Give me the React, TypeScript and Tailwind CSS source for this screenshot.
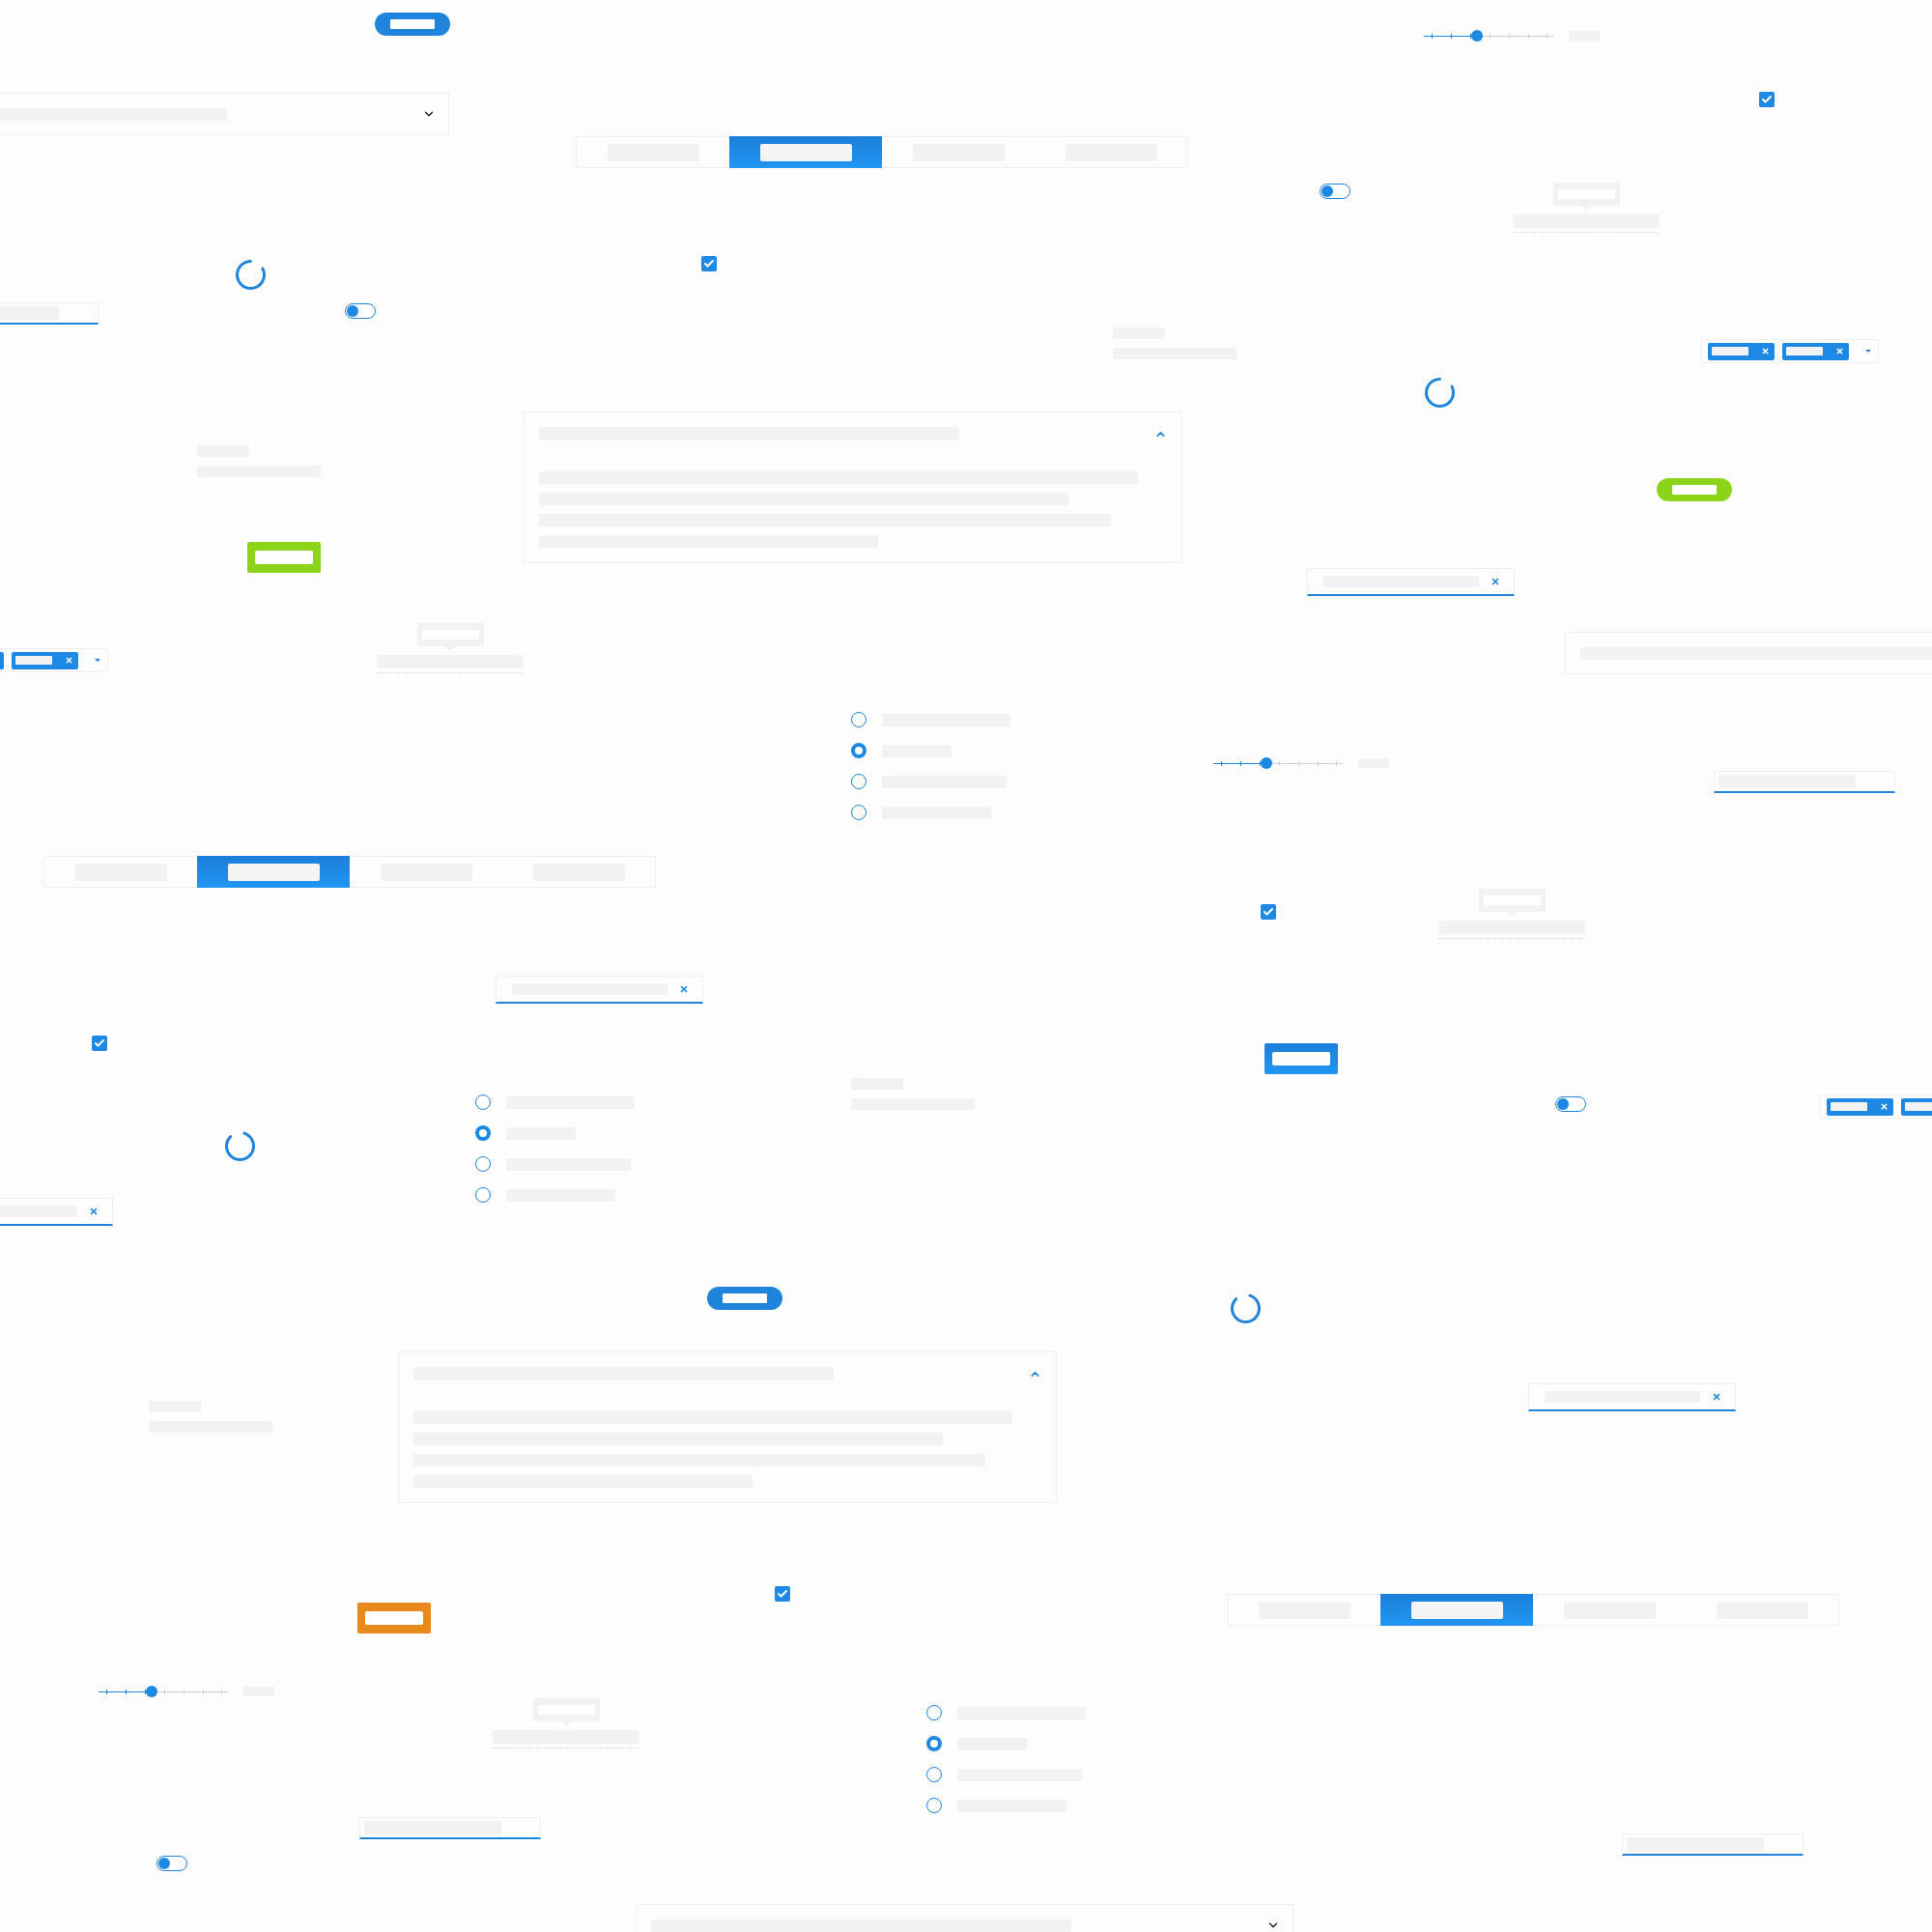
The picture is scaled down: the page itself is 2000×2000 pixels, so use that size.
import { ChevronDown, ChevronUp, Check, X } from 'lucide-react';

type Pos = { x: number; y: number };

// Widgets are scattered on a free canvas: their place is the content
function At({ x, y, children }: Pos & { children: React.ReactNode }) {
  return (
    <div className="absolute" style={{ left: x, top: y }}>
      {children}
    </div>
  );
}

function Pill({ color }: { color: 'blue' | 'green' }) {
  return (
    <div
      className={
        'w-[78px] h-[24px] rounded-full flex items-center justify-center ' +
        (color === 'blue' ? 'bg-[#1e84dc]' : 'bg-[#8bd41a]')
      }
    >
      <div className="w-[46px] h-[10px] bg-white rounded-[1px]" />
    </div>
  );
}

function RectButton({ color }: { color: 'blue' | 'green' | 'orange' }) {
  const bg =
    color === 'blue'
      ? 'bg-gradient-to-b from-[#1c7fd9] to-[#2196f3]'
      : color === 'green'
        ? 'bg-[#8bd41a]'
        : 'bg-[#e8891c]';
  return (
    <div className={'w-[76px] h-[32px] rounded-[2px] flex items-center justify-center ' + bg}>
      <div className="w-[60px] h-[14px] bg-white rounded-[2px]" />
    </div>
  );
}

function Select() {
  return (
    <div className="w-[681px] h-[44px] border border-[#efefef] bg-[#fdfdfd] flex items-center justify-between pl-[15px] pr-[13px]">
      <div className="w-[435px] h-[13px] bg-[#f2f2f2]" />
      <ChevronDown size={14} strokeWidth={2.5} className="text-[#222]" />
    </div>
  );
}

function Tabs() {
  return (
    <div className="w-[634px] h-[33px] border border-[#efefef] bg-[#fdfdfd] flex">
      {[0, 1, 2, 3].map((i) => (
        <div
          key={i}
          className={
            'flex-1 flex items-center justify-center ' +
            (i === 1 ? 'bg-gradient-to-b from-[#1c7fd9] to-[#2196f3] -my-px' : '')
          }
        >
          <div className={'w-[95px] h-[18px] ' + (i === 1 ? 'bg-[#f4f4f4] rounded-[2px]' : 'bg-[#f2f2f2]')} />
        </div>
      ))}
    </div>
  );
}

function Slider() {
  const ticks = [8, 28, 48, 68, 88, 108, 127];
  return (
    <div className="flex items-center gap-[16px]">
      <div className="relative w-[134px] h-[12px]">
        <div className="absolute left-0 top-[6px] w-[55px] h-px bg-[#1e84dc]" />
        <div className="absolute left-[55px] top-[6px] w-[79px] h-px bg-[#cfcfcf]" />
        {ticks.map((t) => (
          <div
            key={t}
            className={'absolute top-[4px] w-px h-[5px] ' + (t < 55 ? 'bg-[#1e84dc]' : 'bg-[#cfcfcf]')}
            style={{ left: t }}
          />
        ))}
        <div className="absolute left-[49px] top-0 w-[12px] h-[12px] rounded-full bg-[#1e88e5]" />
      </div>
      <div className="w-[32px] h-[10px] bg-[#f2f2f2]" />
    </div>
  );
}

function Checkbox() {
  return (
    <div className="w-[16px] h-[16px] rounded-[2px] bg-[#1e88e5] flex items-center justify-center">
      <Check size={12} strokeWidth={4} className="text-white" />
    </div>
  );
}

function Toggle() {
  return (
    <div className="w-[32px] h-[16px] rounded-full border border-[#1e84dc] bg-white flex items-center pl-px">
      <div className="w-[12px] h-[12px] rounded-full bg-[#1e88e5]" />
    </div>
  );
}

function Tooltip() {
  return (
    <div className="w-[152px] flex flex-col items-center">
      <div className="w-[69px] h-[24px] bg-[#f2f2f2] flex items-center justify-center">
        <div className="w-[59px] h-[10px] bg-white" />
      </div>
      <div className="w-0 h-0 border-l-[5px] border-r-[5px] border-t-[5px] border-l-transparent border-r-transparent border-t-[#f2f2f2]" />
      <div className="mt-[4px] w-[152px] h-[14px] bg-[#f2f2f2]" />
      <div className="mt-[4px] w-[152px] border-t border-dotted border-[#dcdcdc]" />
    </div>
  );
}

function Spinner({ rotate }: { rotate: number }) {
  return (
    <svg width="33" height="33" viewBox="0 0 33 33" style={{ transform: `rotate(${rotate}deg)` }}>
      <circle
        cx="16.5"
        cy="16.5"
        r="14"
        fill="none"
        stroke="#1e84dc"
        strokeWidth="3"
        strokeLinecap="round"
        strokeDasharray="72 16"
      />
    </svg>
  );
}

function UnderlineInput() {
  return (
    <div className="w-[188px] h-[23px] border border-[#efefef] border-b-2 border-b-[#1e84dc] bg-[#fdfdfd] pl-[4px] pt-[3px]">
      <div className="w-[142px] h-[14px] bg-[#f2f2f2]" />
    </div>
  );
}

function ClearInput() {
  return (
    <div className="w-[215px] h-[29px] border border-[#efefef] border-b-2 border-b-[#1e84dc] bg-[#fdfdfd] flex items-center pl-[16px] pr-[14px] justify-between">
      <div className="w-[161px] h-[12px] bg-[#f2f2f2]" />
      <X size={10} strokeWidth={4} className="text-[#1e84dc]" />
    </div>
  );
}

function LabelValue() {
  return (
    <div className="flex flex-col gap-[9px]">
      <div className="w-[54px] h-[12px] bg-[#f2f2f2]" />
      <div className="w-[128px] h-[12px] bg-[#f2f2f2]" />
    </div>
  );
}

function MultiSelect() {
  return (
    <div className="w-[184px] h-[25px] border border-[#efefef] bg-[#fdfdfd] flex items-center pl-[6px] gap-[8px]">
      {[0, 1].map((i) => (
        <div key={i} className="w-[69px] h-[18px] rounded-[2px] bg-[#1e88e5] flex items-center justify-between pl-[4px] pr-[5px]">
          <div className="w-[38px] h-[9px] bg-[#f2f2f2] rounded-[1px]" />
          <X size={9} strokeWidth={4} className="text-white" />
        </div>
      ))}
      <div className="ml-[9px] w-0 h-0 border-l-[3px] border-r-[3px] border-t-[3px] border-l-transparent border-r-transparent border-t-[#1e84dc]" />
    </div>
  );
}

function Accordion() {
  const lines = [620, 548, 592, 351];
  return (
    <div className="w-[682px] h-[157px] border border-[#efefef] bg-[#fdfdfd] px-[15px] pt-[15px]">
      <div className="flex items-center justify-between">
        <div className="w-[435px] h-[14px] bg-[#f2f2f2]" />
        <ChevronUp size={13} strokeWidth={3} className="text-[#1e84dc]" />
      </div>
      <div className="mt-[32px] flex flex-col gap-[9px]">
        {lines.map((w) => (
          <div key={w} className="h-[13px] bg-[#f2f2f2]" style={{ width: w }} />
        ))}
      </div>
    </div>
  );
}

function RadioGroup() {
  const labels = [133, 72, 129, 113];
  return (
    <div className="flex flex-col gap-[16px]">
      {labels.map((w, i) => (
        <div key={i} className="flex items-center gap-[16px] h-[16px]">
          <div
            className={
              'w-[16px] h-[16px] rounded-full bg-white ' +
              (i === 1 ? 'border-[4px] border-[#1e88e5]' : 'border border-[#1e84dc]')
            }
          />
          <div className="h-[13px] bg-[#f2f2f2]" style={{ width: w }} />
        </div>
      ))}
    </div>
  );
}

export default function App() {
  return (
    <div className="relative w-[2000px] h-[2000px] overflow-hidden bg-[#fdfdfd] font-['Liberation_Sans',sans-serif]">
      <At x={388} y={13}><Pill color="blue" /></At>
      <At x={732} y={1332}><Pill color="blue" /></At>
      <At x={1715} y={495}><Pill color="green" /></At>

      <At x={256} y={561}><RectButton color="green" /></At>
      <At x={1309} y={1080}><RectButton color="blue" /></At>
      <At x={370} y={1659}><RectButton color="orange" /></At>

      <At x={-216} y={96}><Select /></At>
      <At x={1620} y={654}><Select /></At>
      <At x={658} y={1971}><Select /></At>

      <At x={596} y={141}><Tabs /></At>
      <At x={45} y={886}><Tabs /></At>
      <At x={1270} y={1650}><Tabs /></At>

      <At x={1474} y={31}><Slider /></At>
      <At x={1256} y={784}><Slider /></At>
      <At x={102} y={1745}><Slider /></At>

      <At x={1821} y={95}><Checkbox /></At>
      <At x={726} y={265}><Checkbox /></At>
      <At x={1305} y={936}><Checkbox /></At>
      <At x={95} y={1072}><Checkbox /></At>
      <At x={802} y={1642}><Checkbox /></At>

      <At x={1366} y={190}><Toggle /></At>
      <At x={357} y={314}><Toggle /></At>
      <At x={1610} y={1135}><Toggle /></At>
      <At x={162} y={1921}><Toggle /></At>

      <At x={1566} y={189}><Tooltip /></At>
      <At x={390} y={645}><Tooltip /></At>
      <At x={1489} y={920}><Tooltip /></At>
      <At x={510} y={1758}><Tooltip /></At>

      <At x={243} y={268}><Spinner rotate={-27} /></At>
      <At x={1474} y={390}><Spinner rotate={-27} /></At>
      <At x={232} y={1170}><Spinner rotate={-72} /></At>
      <At x={1273} y={1338}><Spinner rotate={-72} /></At>

      <At x={-86} y={313}><UnderlineInput /></At>
      <At x={1774} y={798}><UnderlineInput /></At>
      <At x={372} y={1881}><UnderlineInput /></At>
      <At x={1679} y={1898}><UnderlineInput /></At>

      <At x={1353} y={588}><ClearInput /></At>
      <At x={513} y={1010}><ClearInput /></At>
      <At x={-98} y={1240}><ClearInput /></At>
      <At x={1582} y={1432}><ClearInput /></At>

      <At x={204} y={461}><LabelValue /></At>
      <At x={1152} y={339}><LabelValue /></At>
      <At x={881} y={1116}><LabelValue /></At>
      <At x={154} y={1450}><LabelValue /></At>

      <At x={1761} y={351}><MultiSelect /></At>
      <At x={-72} y={671}><MultiSelect /></At>
      <At x={1884} y={1133}><MultiSelect /></At>

      <At x={542} y={426}><Accordion /></At>
      <At x={412} y={1399}><Accordion /></At>

      <At x={881} y={737}><RadioGroup /></At>
      <At x={492} y={1133}><RadioGroup /></At>
      <At x={959} y={1765}><RadioGroup /></At>
    </div>
  );
}
